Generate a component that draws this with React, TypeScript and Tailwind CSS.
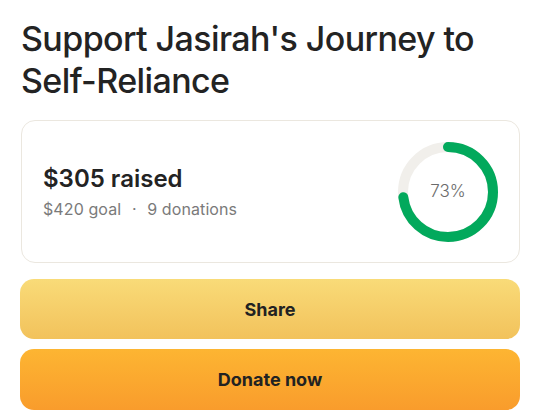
import React from 'react';

const Donut: React.FC<{ percent: number }> = ({ percent }) => {
  const r = 45;
  const c = 2 * Math.PI * r;
  return (
    <div className="relative w-[102px] h-[102px] shrink-0">
      <svg width="102" height="102" viewBox="0 0 102 102">
        <circle cx="51" cy="51" r={r} fill="none" stroke="#f1efeb" strokeWidth="10" />
        <circle
          cx="51"
          cy="51"
          r={r}
          fill="none"
          stroke="#02a95c"
          strokeWidth="10"
          strokeLinecap="round"
          strokeDasharray={`${(c * percent) / 100} ${c}`}
          transform="rotate(-90 51 51)"
        />
      </svg>
      <div className="absolute inset-0 flex items-center justify-center text-[17px] font-light text-[#6b6b6b]">
        {percent}%
      </div>
    </div>
  );
};

export default function App() {
  return (
    <div className="w-[540px] h-[418px] bg-white px-5 pt-[18px] font-['Inter','Noto_Sans',sans-serif] text-[#232323]">
      <h1 className="text-[34px] leading-[42px] font-medium tracking-[-0.6px] px-[1px]">
        Support Jasirah's Journey to Self-Reliance
      </h1>

      <div className="mt-[18px] ml-[1px] h-[143px] rounded-[14px] border border-[#ebe7df] flex items-center justify-between pl-[21px] pr-[20px]">
        <div>
          <div className="text-[24px] leading-[30px] font-semibold">$305 raised</div>
          <div className="mt-[5px] text-[16px] leading-[20px] text-[#7a7a7a] tracking-[0.1px]">
            $420 goal <span className="mx-[6px]">·</span> 9 donations
          </div>
        </div>
        <Donut percent={73} />
      </div>

      <div className="mt-4 flex flex-col gap-[10px]">
        <button className="h-[60px] rounded-[14px] bg-gradient-to-b from-[#f9db78] to-[#f2c25b] text-[18px] font-bold text-[#222]">
          Share
        </button>
        <button className="h-[61px] rounded-[14px] bg-gradient-to-b from-[#fdb532] to-[#f99c2c] text-[18px] font-bold text-[#222]">
          Donate now
        </button>
      </div>
    </div>
  );
}
